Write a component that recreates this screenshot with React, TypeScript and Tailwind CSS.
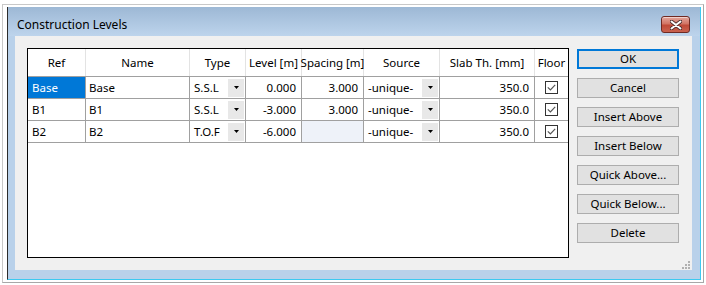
import React from 'react';

const font = { fontFamily: '"Noto Sans", "Open Sans", sans-serif' };

type Row = { ref: string; name: string; type: string; level: string; spacing: string; source: string; slab: string; selected?: boolean };

const rows: Row[] = [
  { ref: 'Base', name: 'Base', type: 'S.S.L', level: '0.000', spacing: '3.000', source: '-unique-', slab: '350.0', selected: true },
  { ref: 'B1', name: 'B1', type: 'S.S.L', level: '-3.000', spacing: '3.000', source: '-unique-', slab: '350.0' },
  { ref: 'B2', name: 'B2', type: 'T.O.F', level: '-6.000', spacing: '', source: '-unique-', slab: '350.0' },
];

const buttons = ['OK', 'Cancel', 'Insert Above', 'Insert Below', 'Quick Above...', 'Quick Below...', 'Delete'];

function DropBtn() {
  return (
    <div className="w-[16px] h-[18px] mr-[1px] bg-[#e8e8e8] flex items-center justify-center shrink-0">
      <svg width="5" height="3" viewBox="0 0 5 3"><polygon points="0,0 5,0 2.5,3" fill="#000" /></svg>
    </div>
  );
}

function Check() {
  return (
    <div className="w-[13px] h-[13px] border border-[#333] bg-white flex items-center justify-center">
      <svg width="9" height="7" viewBox="0 0 9 7"><path d="M0.8 3.4 L3.4 5.9 L8.2 0.9" fill="none" stroke="#555" strokeWidth="1.2" /></svg>
    </div>
  );
}

export default function App() {
  return (
    <div className="w-[706px] h-[285px] bg-white pl-[2px] pt-[4px] text-[11.5px] text-black" style={font}>
      <div className="w-[702px] h-[279px] border border-[#c8c8c8] border-r-[#a8a8a8] border-b-[#a8a8a8] pl-[4px] pt-[2px]">
        <div className="w-[694px] h-[273px] border-l border-l-[#2b2b2b] border-r border-r-[#3cc9f0] border-b border-b-[#3cc9f0] bg-[linear-gradient(to_bottom,#9db8d5_0px,#bdd4ec_29px,#b9d1ea_29px)] flex flex-col">
          {/* title bar */}
          <div className="h-[29px] flex items-center justify-between pl-[9px] pr-[10px] pt-[6px]">
            <span className="text-[12px] leading-none">Construction Levels</span>
            <div className="w-[29px] h-[17px] rounded-[3px] border border-[#6f2a23] bg-[linear-gradient(to_bottom,#e3a69c_0%,#d27565_45%,#c04a38_55%,#c9624f_100%)] flex items-center justify-center shadow-[inset_0_1px_0_rgba(255,255,255,0.5)]">
              <svg width="12" height="10" viewBox="0 0 12 10">
                <path d="M1.5 1.5 L10.5 8.5 M10.5 1.5 L1.5 8.5" stroke="#4a2a2a" strokeWidth="3.6" strokeLinecap="round" />
                <path d="M1.5 1.5 L10.5 8.5 M10.5 1.5 L1.5 8.5" stroke="#fff" strokeWidth="2" strokeLinecap="round" />
              </svg>
            </div>
          </div>

          {/* body */}
          <div className="mx-[7px] ml-[7px] w-[677px] h-[234px] bg-[#f0f0f0] flex p-[12px] relative">
            <div className="w-[542px] h-[210px] border border-black bg-white">
              <div className="flex h-[28px] border-b border-[#a0a0a0]">
                {[
                  ['Ref', 'w-[58px]'], ['Name', 'w-[104px]'], ['Type', 'w-[56px]'], ['Level [m]', 'w-[56px]'],
                  ['Spacing [m]', 'w-[62px]'], ['Source', 'w-[76px]'], ['Slab Th. [mm]', 'w-[95px]'], ['Floor', 'w-[33px]'],
                ].map(([t, w], i) => (
                  <div key={t} className={`${w} flex items-center justify-center whitespace-nowrap ${i < 7 ? 'border-r border-[#e3e3e3]' : ''}`}>{t}</div>
                ))}
              </div>
              {rows.map(r => (
                <div key={r.ref} className="flex h-[22px] border-b border-[#a0a0a0]">
                  <div className={`w-[58px] border-r border-[#a0a0a0] flex items-center pl-[4px] ${r.selected ? 'bg-[#0078d7] text-white' : ''}`}>{r.ref}</div>
                  <div className="w-[104px] border-r border-[#a0a0a0] flex items-center pl-[3px]">{r.name}</div>
                  <div className="w-[56px] border-r border-[#a0a0a0] flex items-center justify-between pl-[4px]">
                    <span>{r.type}</span>
                    <DropBtn />
                  </div>
                  <div className="w-[56px] border-r border-[#a0a0a0] flex items-center justify-end pr-[5px]">{r.level}</div>
                  <div className={`w-[62px] border-r border-[#a0a0a0] flex items-center justify-end pr-[5px] ${r.spacing ? '' : 'bg-[#eef2f9]'}`}>{r.spacing}</div>
                  <div className="w-[76px] border-r border-[#a0a0a0] flex items-center justify-between pl-[4px]">
                    <span>{r.source}</span>
                    <DropBtn />
                  </div>
                  <div className="w-[95px] border-r border-[#a0a0a0] flex items-center justify-end pr-[5px]">{r.slab}</div>
                  <div className="w-[33px] flex items-center justify-center">
                    <Check />
                  </div>
                </div>
              ))}
            </div>

            <div className="ml-[8px] pt-[1px] flex flex-col gap-[9px]">
              {buttons.map((b, i) => (
                <div
                  key={b}
                  className={`w-[102px] h-[20px] flex items-center justify-center bg-[#e1e1e1] ${i === 0 ? 'border-2 border-[#0078d7]' : 'border border-[#adadad]'}`}
                >
                  {b}
                </div>
              ))}
            </div>

            {/* resize grip */}
            <div className="absolute right-[2px] bottom-[1px] grid grid-cols-3 gap-[1px]">
              <span />
              <span />
              <span className="w-[2px] h-[2px] bg-[#b0b0b0]" />
              <span />
              <span className="w-[2px] h-[2px] bg-[#b0b0b0]" />
              <span className="w-[2px] h-[2px] bg-[#b0b0b0]" />
              <span className="w-[2px] h-[2px] bg-[#b0b0b0]" />
              <span className="w-[2px] h-[2px] bg-[#b0b0b0]" />
              <span className="w-[2px] h-[2px] bg-[#b0b0b0]" />
            </div>
          </div>
        </div>
      </div>
    </div>
  );
}
